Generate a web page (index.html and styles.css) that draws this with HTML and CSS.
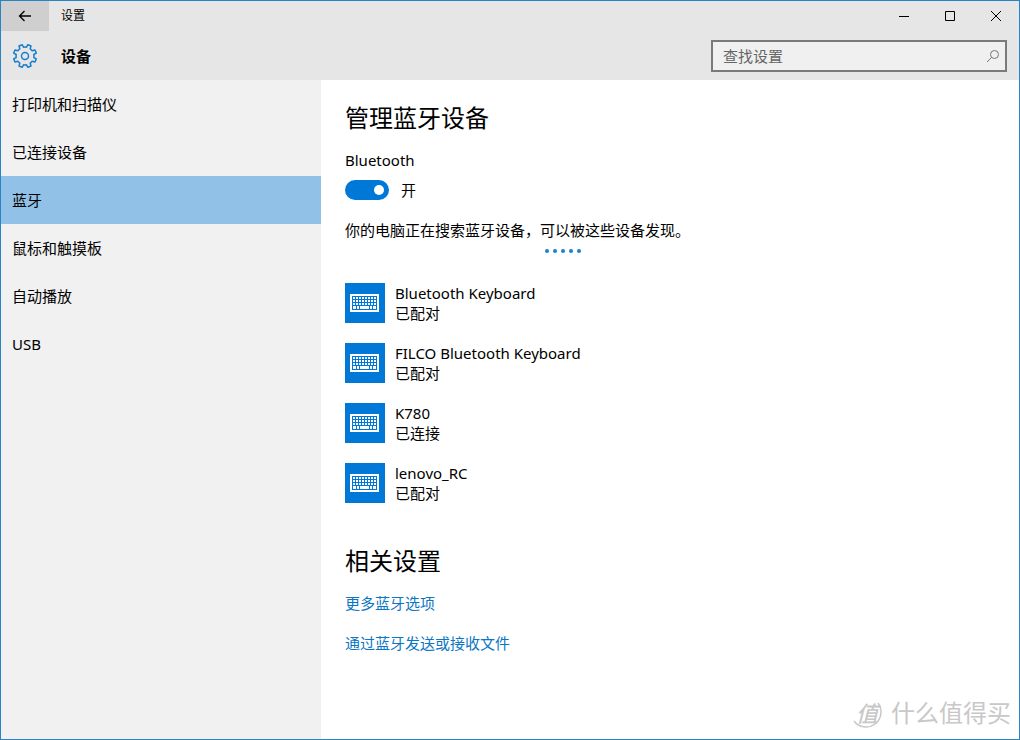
FILE: index.html
```html
<!DOCTYPE html>
<html lang="zh-CN">
<head>
<meta charset="utf-8">
<meta name="viewport" content="width=device-width, initial-scale=1">
<title>设置</title>
<link rel="stylesheet" href="styles.css">
</head>
<body>
<svg class="symbols" aria-hidden="true">
  <symbol id="keyboard" viewBox="0 0 40 40">
    <path fill="#fff" d="M5 11h29v18H5z"/>
    <path fill="none" stroke="#0078d7" d="M7 13.5h25M7 16.5h25M7 19.500h25M7 22.500h25M7 26.500h25M7.500 13v14M31.500 13v14M10.500 13v9M13.500 13v9M16.500 13v9M19.500 13v9M22.500 13v9M25.500 13v9M28.500 13v9M11.500 22v5M14.500 22v5M24.500 22v5M27.500 22v5"/>
  </symbol>
</svg>
<div class="window">
  <header class="header">
    <div class="titlebar">
      <button class="back" type="button" aria-label="返回">
        <svg width="14" height="14" viewBox="0 0 14 14"><path d="M13 7H1.500M6.500 2l-5 5 5 5"/></svg>
      </button>
      <span class="title">设置</span>
      <div class="controls">
        <button type="button" aria-label="最小化"><svg width="12" height="12" viewBox="0 0 12 12"><path d="M1 6.500h10"/></svg></button>
        <button type="button" aria-label="最大化"><svg width="12" height="12" viewBox="0 0 12 12"><path d="M1.500 1.500h9v9h-9z"/></svg></button>
        <button type="button" aria-label="关闭"><svg width="12" height="12" viewBox="0 0 12 12"><path d="M1 1l10 10M11 1L1 11"/></svg></button>
      </div>
    </div>
    <div class="toolbar">
      <svg class="gear" width="26" height="26" viewBox="-13 -13 26 26" aria-hidden="true">
        <path d="M1.500-8.800L2.900-11.300 6-10 5.200-7.200Q6.400-6.400 7.200-5.200L10-6 11.300-2.900 8.800-1.500Q9.100 0 8.800 1.500L11.300 2.900 10 6 7.200 5.200Q6.400 6.400 5.200 7.200L6 10 2.900 11.300 1.500 8.800Q0 9.100-1.500 8.800L-2.900 11.300-6 10-5.200 7.200Q-6.400 6.400-7.200 5.200L-10 6-11.300 2.900-8.800 1.500Q-9.100 0-8.800-1.500L-11.300-2.900-10-6-7.200-5.200Q-6.400-6.400-5.200-7.200L-6-10-2.900-11.300-1.500-8.800Q0-9.100 1.500-8.800z"/>
        <circle r="3.500"/>
      </svg>
      <h1 class="section">设备</h1>
      <form class="search" role="search">
        <input class="search-input" type="text" placeholder="查找设置" aria-label="查找设置">
        <button class="search-button" type="submit" aria-label="搜索">
          <svg width="14" height="14" viewBox="0 0 14 14"><circle cx="8.500" cy="5.500" r="4"/><path d="M5.600 8.400L1 13"/></svg>
        </button>
      </form>
    </div>
  </header>
  <div class="body">
    <nav class="sidebar">
      <a href="#printers">打印机和扫描仪</a>
      <a href="#connected">已连接设备</a>
      <a class="active" href="#bluetooth" aria-current="page">蓝牙</a>
      <a href="#mouse">鼠标和触摸板</a>
      <a href="#autoplay">自动播放</a>
      <a href="#usb">USB</a>
    </nav>
    <main class="main">
      <h2>管理蓝牙设备</h2>
      <label class="field-name" for="bt">Bluetooth</label>
      <div class="toggle-row">
        <input class="toggle" id="bt" type="checkbox" role="switch" checked>
        <span>开</span>
      </div>
      <p class="status">你的电脑正在搜索蓝牙设备，可以被这些设备发现。</p>
      <div class="progress"><i></i><i></i><i></i><i></i><i></i></div>
      <ul class="devices">
        <li><svg class="device-icon"><use href="#keyboard"/></svg><div><p>Bluetooth Keyboard</p><p>已配对</p></div></li>
        <li><svg class="device-icon"><use href="#keyboard"/></svg><div><p>FILCO Bluetooth Keyboard</p><p>已配对</p></div></li>
        <li><svg class="device-icon"><use href="#keyboard"/></svg><div><p>K780</p><p>已连接</p></div></li>
        <li><svg class="device-icon"><use href="#keyboard"/></svg><div><p>lenovo_RC</p><p>已配对</p></div></li>
      </ul>
      <h2>相关设置</h2>
      <div class="links">
        <a href="#more">更多蓝牙选项</a>
        <a href="#transfer">通过蓝牙发送或接收文件</a>
      </div>
    </main>
  </div>
  <div class="watermark">
    <span class="seal">值<svg width="32" height="32" viewBox="0 0 32 32" aria-hidden="true"><path d="M27 6A14 14 0 0 1 3 24"/></svg></span>
    <span>什么值得买</span>
  </div>
</div>
</body>
</html>
```
FILE: styles.css
```css
* {
  box-sizing: border-box;
}

body {
  margin: 0;
  color: #000;
  font: 15px/20px "Noto Sans", "Noto Sans CJK SC", sans-serif;
}

h1, h2, p, ul {
  margin: 0;
  padding: 0;
}

button {
  display: flex;
  align-items: center;
  justify-content: center;
  padding: 0;
  border: 0;
  background: none;
}

svg {
  fill: none;
  stroke: #000;
}

.symbols {
  position: absolute;
  width: 0;
  height: 0;
}

.window {
  position: relative;
  display: flex;
  flex-direction: column;
  min-height: 100vh;
  border: 1px solid #2a84c4;
  background: #fff;
}

.header {
  background: #e6e6e6;
}

.titlebar {
  display: flex;
  align-items: center;
  height: 30px;
}

.back {
  width: 48px;
  height: 30px;
  background: #cfcfcf;
}

.back svg {
  stroke-width: 1.3;
}

.title {
  margin-left: 12px;
  font-size: 12px;
}

.controls {
  display: flex;
  margin-left: auto;
}

.controls button {
  width: 46px;
  height: 30px;
}

.toolbar {
  display: flex;
  align-items: center;
  padding: 9px 12px 8px 11px;
}

.gear {
  stroke: #1a7fcc;
  stroke-width: 1.5;
  stroke-linejoin: round;
}

.section {
  margin-left: 23px;
  font-size: 15px;
  line-height: 20px;
  font-weight: 700;
}

.search {
  display: flex;
  width: 296px;
  height: 32px;
  margin-left: auto;
  border: 2px solid #7a7a7a;
  background: #f0f0f0;
}

.search-input {
  flex: 1;
  min-width: 0;
  padding: 0 10px;
  border: 0;
  outline: 0;
  background: none;
  font: inherit;
}

.search-input::placeholder {
  color: #666;
  opacity: 1;
}

.search-button {
  width: 24px;
}

.search-button svg {
  stroke: #777;
}

.body {
  display: flex;
  flex: 1;
}

.sidebar {
  flex: 0 0 320px;
  background: #f1f1f1;
}

.sidebar a {
  display: flex;
  align-items: center;
  height: 48px;
  padding: 0 11px;
  color: #000;
  text-decoration: none;
}

.sidebar .active {
  background: #91c1e7;
}

.main {
  flex: 1;
  padding: 20px 24px;
}

h2 {
  font-size: 24px;
  line-height: 36px;
  font-weight: 400;
}

.field-name {
  display: block;
  margin-top: 14px;
}

.toggle-row {
  display: flex;
  gap: 12px;
  margin: 10px 0 20px;
}

.toggle {
  display: flex;
  align-items: center;
  justify-content: flex-end;
  width: 44px;
  height: 20px;
  margin: 0;
  padding: 0 5px;
  appearance: none;
  border-radius: 10px;
  background: #0078d7;
}

.toggle::before {
  content: "";
  width: 10px;
  height: 10px;
  border-radius: 50%;
  background: #fff;
}

.toggle:not(:checked) {
  justify-content: flex-start;
  background: #999;
}

.progress {
  display: flex;
  justify-content: center;
  gap: 4px;
  max-width: 436px;
  margin: 9px 0 30px;
}

.progress i {
  width: 4px;
  height: 4px;
  border-radius: 50%;
  background: #1a7fcc;
}

.devices {
  display: flex;
  flex-direction: column;
  gap: 20px;
  margin-bottom: 40px;
  list-style: none;
}

.devices li {
  display: flex;
  gap: 10px;
}

.device-icon {
  width: 40px;
  height: 40px;
  background: #0078d7;
  stroke: none;
}

.links {
  display: flex;
  flex-direction: column;
  align-items: flex-start;
  gap: 20px;
  margin-top: 14px;
}

.links a {
  color: #0a76c4;
  text-decoration: none;
}

.watermark {
  position: absolute;
  right: 8px;
  bottom: 10px;
  display: flex;
  align-items: center;
  gap: 8px;
  color: #c8c8c8;
  font-size: 24px;
  line-height: 32px;
}

.seal {
  position: relative;
  width: 32px;
  font-size: 22px;
  font-style: italic;
  font-weight: 500;
  text-align: center;
}

.seal svg {
  position: absolute;
  inset: 0;
  stroke: #c8c8c8;
  stroke-width: 1.5;
}
```
